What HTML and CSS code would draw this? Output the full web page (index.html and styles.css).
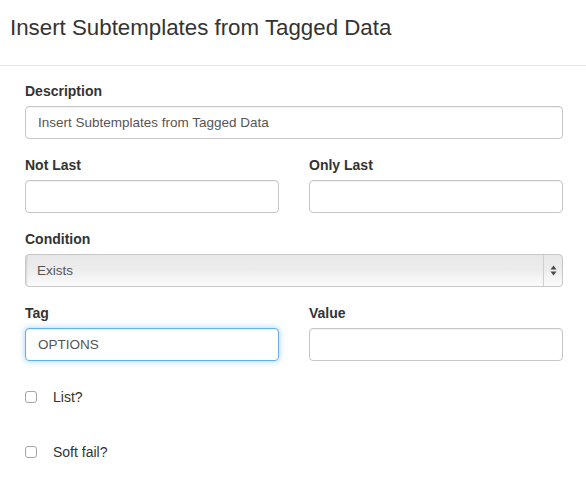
FILE: index.html
```html
<!DOCTYPE html>
<html>
<head>
<meta charset="utf-8">
<link rel="stylesheet" href="styles.css">
</head>
<body>
<div class="modal">
  <div class="modal-header">
    <h3 class="modal-title">Insert Subtemplates from Tagged Data</h3>
  </div>
  <div class="modal-body">
    <div class="form-group">
      <label class="label">Description</label>
      <div class="input">Insert Subtemplates from Tagged Data</div>
    </div>
    <div class="row">
      <div class="form-group col">
        <label class="label">Not Last</label>
        <div class="input"></div>
      </div>
      <div class="form-group col">
        <label class="label">Only Last</label>
        <div class="input"></div>
      </div>
    </div>
    <div class="form-group">
      <label class="label">Condition</label>
      <div class="select">
        <span class="select-text">Exists</span>
        <span class="select-arrows">
          <svg width="7" height="11" viewBox="0 0 7 11"><path d="M3.5 0.5 L6.5 4.5 L0.5 4.5 Z" fill="#4a4a4a"/><path d="M0.5 6.5 L6.5 6.5 L3.5 10.5 Z" fill="#4a4a4a"/></svg>
        </span>
      </div>
    </div>
    <div class="row">
      <div class="form-group col">
        <label class="label">Tag</label>
        <div class="input focus">OPTIONS</div>
      </div>
      <div class="form-group col">
        <label class="label">Value</label>
        <div class="input"></div>
      </div>
    </div>
    <div class="checkbox-group">
      <div class="checkbox"><span class="box"></span><span class="check-label">List?</span></div>
    </div>
    <div class="checkbox-group">
      <div class="checkbox"><span class="box"></span><span class="check-label">Soft fail?</span></div>
    </div>
  </div>
</div>
</body>
</html>
```
FILE: styles.css
```css
* { box-sizing: border-box; }
html, body { margin: 0; padding: 0; background: #fff; }
body {
  font-family: "Liberation Sans", Arial, Helvetica, sans-serif;
  color: #333;
  width: 586px;
  height: 479px;
  overflow: hidden;
}
.modal-header {
  padding: 16px 10px 0 10px;
  height: 66px;
  border-bottom: 1px solid #e5e5e5;
}
.modal-title {
  margin: 0;
  font-size: 22.3px;
  font-weight: normal;
  line-height: 24px;
  color: #333;
}
.modal-body {
  padding: 15px 23px 0 25px;
}
.form-group {
  margin-bottom: 16px;
}
.row {
  display: flex;
  gap: 30px;
}
.col { flex: 1 1 0; min-width: 0; }
.label {
  display: block;
  font-size: 14px;
  font-weight: bold;
  line-height: 20px;
  margin-bottom: 5px;
  color: #333;
}
.input {
  height: 33px;
  border: 1px solid #c6c6c6;
  border-radius: 4px;
  padding: 0 12px;
  font-size: 13.5px;
  line-height: 31px;
  color: #555;
  background: #fff;
  box-shadow: inset 0 1px 1px rgba(0,0,0,.05);
}
.input.focus {
  border-color: #66afe9;
  box-shadow: inset 0 1px 1px rgba(0,0,0,.075), 0 0 6px rgba(102,175,233,.6);
}
.select {
  display: flex;
  height: 33px;
  border: 1px solid #c8c8c8;
  border-radius: 4px;
  background: linear-gradient(#e8e8e8, #ececec 45%, #f6f6f6 80%, #fbfbfb);
  box-shadow: inset 2px 0 2px -1px rgba(0,0,0,.12);
  overflow: hidden;
}
.select-text {
  flex: 1;
  padding-left: 11px;
  font-size: 13.5px;
  line-height: 31px;
  color: #555;
}
.select-arrows {
  width: 19px;
  border-left: 1px solid #cfcfcf;
  display: flex;
  align-items: center;
  justify-content: center;
}
.checkbox-group {
  padding: 10px 0;
  margin-bottom: 15px;
}
.checkbox {
  display: flex;
  align-items: center;
  height: 20px;
}
.box {
  width: 12px;
  height: 12px;
  border: 1px solid #a6a6a6;
  border-radius: 3px;
  background: #fff;
  margin-right: 16px;
}
.check-label {
  font-size: 14px;
  color: #333;
}
```
